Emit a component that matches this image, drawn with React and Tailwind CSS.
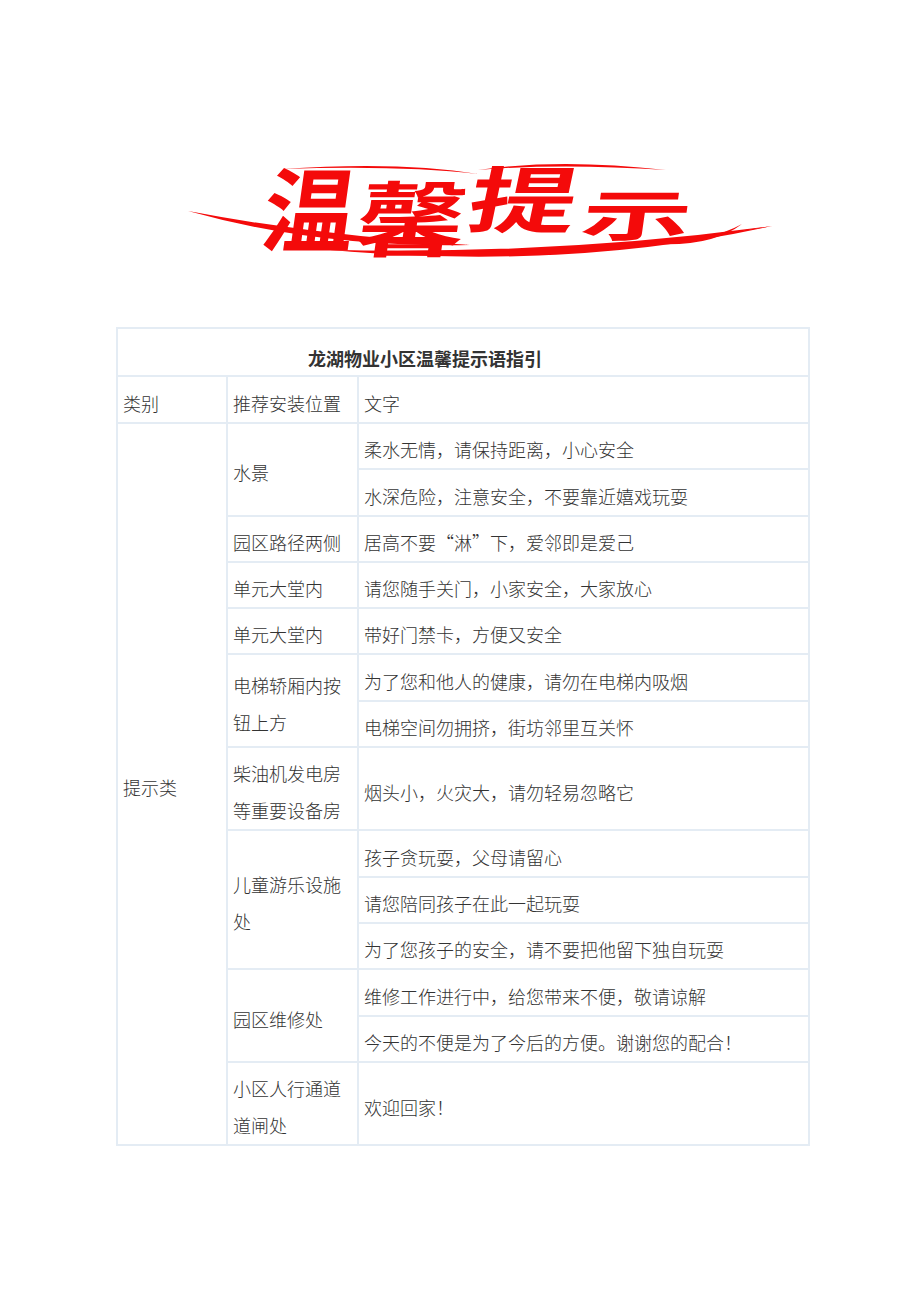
import React from "react";

const F = { fontFamily: '"Noto Sans CJK SC", "Noto Sans", sans-serif' };

function Logo() {
  const red = "#f40a0a";
  return (
    <svg className="block ml-[185px] w-[592px] h-[180px] overflow-visible" viewBox="185 120 592 180" xmlns="http://www.w3.org/2000/svg">
      {/* swooshes */}
      <path d="M188 213 Q 300 238 470 247 Q 310 240 188 213 Z" fill={red} />
      <path d="M188 213 Q 320 250 470 247 Q 320 238 188 213 Z" fill={red} />
      <path d="M330 252 Q 560 266 772 228 Q 560 257 330 252 Z" fill={red} />
      <path d="M330 252 Q 570 273 772 228 Q 560 262 330 252 Z" fill={red} />
      <path d="M282 171 Q 400 163 478 176 Q 400 167 282 171 Z" fill={red} />
      <path d="M478 172 Q 560 160 666 172 Q 560 165 478 172 Z" fill={red} />
      <path d="M655 244 Q 710 244 742 226 Q 712 249 655 246 Z" fill={red} />
      <text
        transform="translate(259 247) skewX(-8)"
        fontSize="92"
        fontWeight="700"
        fill={red}
        style={F}
      >
        温
      </text>
      <text
        transform="translate(352 252) scale(1.38 1.02) skewX(-6)"
        fontSize="80"
        fontWeight="700"
        fill={red}
        style={F}
      >
        馨
      </text>
      <text
        transform="translate(464 229) scale(1.5 1) skewX(-8)"
        fontSize="72"
        fontWeight="700"
        fill={red}
        style={F}
      >
        提
      </text>
      <text
        transform="translate(579 238) scale(2.0 1) skewX(-4)"
        fontSize="55"
        fontWeight="700"
        fill={red}
        style={F}
      >
        示
      </text>
    </svg>
  );
}

const cell = "border-2 border-[#e4ecf4] align-middle pl-[5px] pr-[5px] pt-[7.3px] pb-0 leading-[37px] font-light";

export default function App() {
  return (
    <div className="min-h-[1302px] w-[920px] bg-white pt-[118px] text-[18px] text-[#333333]" style={F}>
      <Logo />
      <table className="ml-[116px] mt-[29px] w-[692px] table-fixed border-collapse">
        <colgroup>
          <col className="w-[110px]" />
          <col className="w-[131px]" />
          <col className="w-[451px]" />
        </colgroup>
        <tbody>
          <tr>
            <td colSpan={3} className="border-2 border-[#e4ecf4] pl-[190px] pt-[12px] pb-0 leading-[34px] font-bold text-left">
              龙湖物业小区温馨提示语指引
            </td>
          </tr>
          <tr>
            <td className={cell + " pt-[8px]"}>类别</td>
            <td className={cell + " pt-[8px]"}>推荐安装位置</td>
            <td className={cell + " pt-[8px]"}>文字</td>
          </tr>
          <tr>
            <td rowSpan={14} className={cell}>提示类</td>
            <td rowSpan={2} className={cell}>水景</td>
            <td className={cell}>柔水无情，请保持距离，小心安全</td>
          </tr>
          <tr>
            <td className={cell}>水深危险，注意安全，不要靠近嬉戏玩耍</td>
          </tr>
          <tr>
            <td className={cell}>园区路径两侧</td>
            <td className={cell}>居高不要“淋”下，爱邻即是爱己</td>
          </tr>
          <tr>
            <td className={cell}>单元大堂内</td>
            <td className={cell}>请您随手关门，小家安全，大家放心</td>
          </tr>
          <tr>
            <td className={cell}>单元大堂内</td>
            <td className={cell}>带好门禁卡，方便又安全</td>
          </tr>
          <tr>
            <td rowSpan={2} className={cell}>电梯轿厢内按钮上方</td>
            <td className={cell}>为了您和他人的健康，请勿在电梯内吸烟</td>
          </tr>
          <tr>
            <td className={cell}>电梯空间勿拥挤，街坊邻里互关怀</td>
          </tr>
          <tr>
            <td className={cell}>柴油机发电房等重要设备房</td>
            <td className={cell}>烟头小，火灾大，请勿轻易忽略它</td>
          </tr>
          <tr>
            <td rowSpan={3} className={cell}>儿童游乐设施处</td>
            <td className={cell}>孩子贪玩耍，父母请留心</td>
          </tr>
          <tr>
            <td className={cell}>请您陪同孩子在此一起玩耍</td>
          </tr>
          <tr>
            <td className={cell}>为了您孩子的安全，请不要把他留下独自玩耍</td>
          </tr>
          <tr>
            <td rowSpan={2} className={cell}>园区维修处</td>
            <td className={cell}>维修工作进行中，给您带来不便，敬请谅解</td>
          </tr>
          <tr>
            <td className={cell}>今天的不便是为了今后的方便。谢谢您的配合！</td>
          </tr>
          <tr>
            <td className={cell}>小区人行通道道闸处</td>
            <td className={cell}>欢迎回家！</td>
          </tr>
        </tbody>
      </table>
    </div>
  );
}
